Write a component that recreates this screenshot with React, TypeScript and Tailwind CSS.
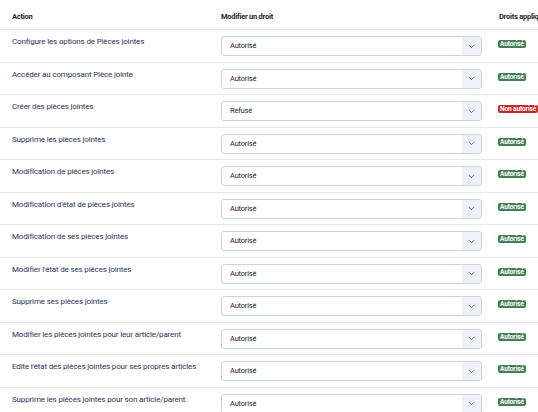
import { ChevronDown } from 'lucide-react';

type Perm = { label: string; value: 'Autorisé' | 'Refusé' };

const perms: Perm[] = [
  { label: 'Configure les options de Pièces jointes', value: 'Autorisé' },
  { label: 'Accéder au composant Pièce jointe', value: 'Autorisé' },
  { label: 'Créer des pièces jointes', value: 'Refusé' },
  { label: 'Supprime les pièces jointes', value: 'Autorisé' },
  { label: 'Modification de pièces jointes', value: 'Autorisé' },
  { label: "Modification d'état de pièces jointes", value: 'Autorisé' },
  { label: 'Modification de ses pièces jointes', value: 'Autorisé' },
  { label: "Modifier l'état de ses pièces jointes", value: 'Autorisé' },
  { label: 'Supprime ses pièces jointes', value: 'Autorisé' },
  { label: 'Modifier les pièces jointes pour leur article/parent', value: 'Autorisé' },
  { label: "Edite l'état des pièces jointes pour ses propres articles", value: 'Autorisé' },
  { label: 'Supprime les pièces jointes pour son article/parent.', value: 'Autorisé' },
];

function Badge({ ok }: { ok: boolean }) {
  return (
    <span
      className={`block w-fit whitespace-nowrap rounded-[2px] px-[2px] text-[6.5px] font-bold leading-[8px] tracking-[-0.1px] text-white ${
        ok ? 'bg-[#457d54]' : 'bg-[#c52827]'
      }`}
    >
      {ok ? 'Autorisé' : 'Non autorisé'}
    </span>
  );
}

function Row({ perm }: { perm: Perm }) {
  return (
    <div className="grid h-[32.5px] grid-cols-[209px_278px_1fr] border-t border-[#e3e6ea]">
      <div className="whitespace-nowrap pl-3 pt-[6px] text-[8px] leading-[12px] tracking-[-0.15px] text-[#2a3656]">
        {perm.label}
      </div>
      <div className="pl-3 pt-[6px]">
        <div className="flex h-5 w-[261px] items-stretch overflow-hidden rounded-[3px] border border-[#cbd3df] bg-white">
          <div className="flex flex-1 items-center pl-[8px] text-[7.5px] tracking-[-0.2px] text-[#22262a]">
            {perm.value}
          </div>
          <div className="flex w-[19px] items-center justify-center bg-[#eef2f8]">
            <ChevronDown size={9} strokeWidth={1.6} className="text-[#22262a]" />
          </div>
        </div>
      </div>
      <div className="pl-[11px] pt-[10px] leading-none">
        <Badge ok={perm.value === 'Autorisé'} />
      </div>
    </div>
  );
}

export default function App() {
  return (
    <div className="h-[412px] w-[538px] overflow-hidden bg-white font-['Roboto',sans-serif]">
      <div className="grid h-[29px] grid-cols-[209px_278px_1fr] text-[7.5px] font-bold leading-[12px] tracking-[-0.25px] text-[#22262a]">
        <div className="pl-3 pt-[11px]">Action</div>
        <div className="pl-3 pt-[11px]">Modifier un droit</div>
        <div className="whitespace-nowrap pl-3 pt-[11px]">Droits appliqués</div>
      </div>
      {perms.map((p) => (
        <Row key={p.label} perm={p} />
      ))}
    </div>
  );
}
